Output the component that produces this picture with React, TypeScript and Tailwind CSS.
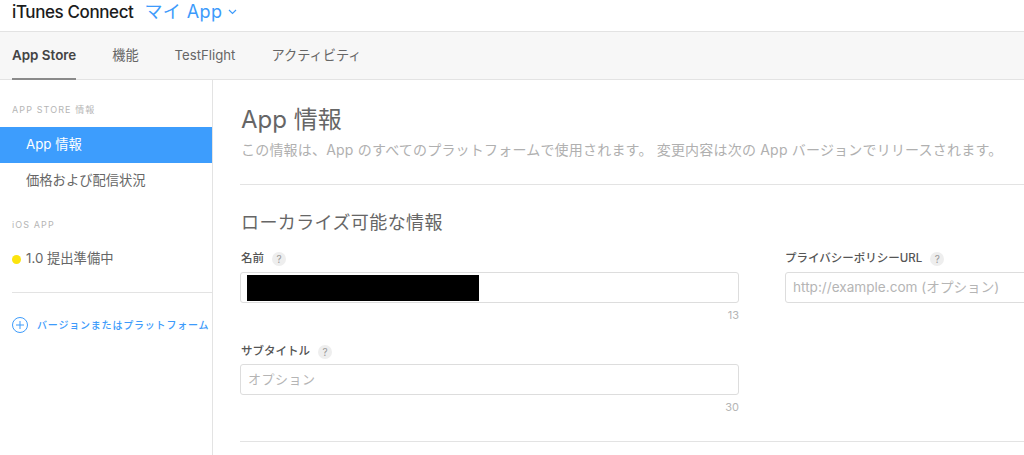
import React from "react";

const font = "font-['Inter','Noto_Sans_CJK_JP',sans-serif]";

function Q() {
  return (
    <span className="flex h-[14px] w-[14px] items-center justify-center rounded-full bg-[#eeeeee] text-[10px] font-normal text-[#999999]">?</span>
  );
}

function Tab({ label, active }: { label: string; active?: boolean }) {
  return (
    <div className={`flex h-[48px] items-center ${active ? "border-b-2 border-[#8a8a8a] text-[13.4px] font-semibold text-[#444444]" : "text-[13.2px] text-[#666666]"}`}>
      {label}
    </div>
  );
}

export default function App() {
  return (
    <div className={`${font} flex h-[455px] w-[1024px] flex-col overflow-hidden bg-white`}>
      <header className="flex h-[32px] shrink-0 items-center gap-[11px] border-b border-[#e3e3e3] pb-[7px] pl-[12px]">
        <span className="text-[17px] font-medium leading-[24px] tracking-[-0.4px] text-[#1c1c1c]">iTunes Connect</span>
        <span className="flex items-center gap-[6px] text-[18px] leading-[24px] tracking-[0.4px] text-[#3d9bfb]">
          マイ App
          <svg width="9" height="6" viewBox="0 0 9 6" fill="none" stroke="#3d9bfb" strokeWidth="1.2"><path d="M1 1l3.5 3.5L8 1" /></svg>
        </span>
      </header>
      <nav className="flex h-[48px] shrink-0 gap-[36px] border-b border-[#e3e3e3] bg-[#f7f7f7] pl-[12px]">
        <Tab label="App Store" active />
        <Tab label="機能" />
        <Tab label="TestFlight" />
        <Tab label="アクティビティ" />
      </nav>
      <div className="flex min-h-0 flex-1">
        <aside className="w-[213px] shrink-0 border-r border-[#e3e3e3] pt-[24px]">
          <div className="pl-[12px] text-[9px] leading-[12px] tracking-[1.1px] text-[#b5b5b5]">APP STORE 情報</div>
          <div className="mt-[11px] flex h-[36px] items-center bg-[#3d9dfd] pl-[26px] text-[13.3px] text-white">App 情報</div>
          <div className="flex h-[35px] items-center pl-[26px] text-[13.3px] text-[#666666]">価格および配信状況</div>
          <div className="mt-[21px] pl-[12px] text-[9px] leading-[12px] tracking-[1.1px] text-[#b5b5b5]">iOS APP</div>
          <div className="mt-[10px] flex h-[36px] items-center gap-[5px] pl-[12px] text-[13.3px] text-[#666666]">
            <span className="h-[9px] w-[9px] rounded-full bg-[#fce40e]" />
            <span>1.0 提出準備中</span>
          </div>
          <div className="ml-[12px] mt-[15px] flex items-center gap-[9px] whitespace-nowrap border-t border-[#e3e3e3] pt-[24px] text-[10px] font-medium tracking-[0.8px] text-[#3d9bfb]">
            <svg className="shrink-0" width="16" height="16" viewBox="0 0 16 16" fill="none" stroke="#3d9bfb" strokeWidth="1"><circle cx="8" cy="8" r="7.5" /><path d="M8 4v8M4 8h8" /></svg>
            バージョンまたはプラットフォーム
          </div>
        </aside>
        <main className="min-w-0 flex-1 overflow-hidden pl-[27px]">
          <h1 className="pl-[1px] pt-[24px] text-[24px] leading-[32px] text-[#666666]">App 情報</h1>
          <p className="mt-[4px] whitespace-nowrap pl-[1px] text-[14px] leading-[20px] tracking-[0.2px] text-[#b0b0b0]">この情報は、App のすべてのプラットフォームで使用されます。 変更内容は次の App バージョンでリリースされます。</p>
          <div className="mt-[24px] border-t border-[#e3e3e3]" />
          <h2 className="mt-[25px] pl-[1px] text-[18px] leading-[26px] tracking-[0.4px] text-[#666666]">ローカライズ可能な情報</h2>
          <div className="mt-[14px] flex gap-[46px]">
            <div className="w-[499px] shrink-0">
              <div className="flex h-[18px] items-center gap-[8px] pl-[1px] text-[11.5px] font-medium text-[#555555]">名前 <Q /></div>
              <div className="mt-[4px] flex h-[31px] items-center rounded-[3px] border border-[#dddddd] pl-[6px]">
                <div className="h-[26px] w-[232px] bg-black" />
              </div>
              <div className="mt-[6px] text-right text-[11px] leading-[12px] text-[#b5b5b5]">13</div>
              <div className="mt-[22px] flex h-[18px] items-center gap-[8px] pl-[1px] text-[11.5px] font-medium text-[#555555]">サブタイトル <Q /></div>
              <div className="mt-[3px] flex h-[31px] items-center rounded-[3px] border border-[#dddddd] pl-[7px] text-[13px] tracking-[0.5px] text-[#b5b5b5]">オプション</div>
              <div className="mt-[6px] text-right text-[11px] leading-[12px] text-[#b5b5b5]">30</div>
            </div>
            <div className="w-[300px] shrink-0">
              <div className="flex h-[18px] items-center gap-[8px] whitespace-nowrap text-[11.5px] font-medium text-[#555555]">プライバシーポリシーURL <Q /></div>
              <div className="mt-[4px] flex h-[31px] items-center rounded-[3px] border border-[#dddddd] pl-[7px] text-[13.6px] text-[#b5b5b5]">http://example.com (オプション)</div>
            </div>
          </div>
          <div className="mt-[28px] border-t border-[#e3e3e3]" />
        </main>
      </div>
    </div>
  );
}
